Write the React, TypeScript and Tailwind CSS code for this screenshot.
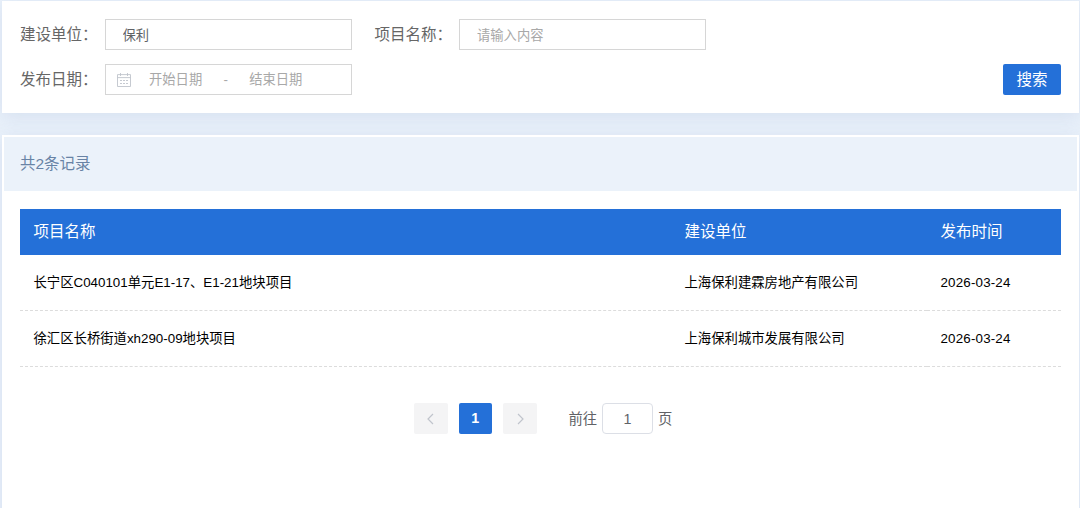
import type { ReactNode } from "react";

const columns = ["项目名称", "建设单位", "发布时间"];

const records = [
  {
    name: "长宁区C040101单元E1-17、E1-21地块项目",
    company: "上海保利建霖房地产有限公司",
    date: "2026-03-24",
  },
  {
    name: "徐汇区长桥街道xh290-09地块项目",
    company: "上海保利城市发展有限公司",
    date: "2026-03-24",
  },
];

const CalendarIcon = () => (
  <svg
    className="mr-[18.5px] h-[14px] w-[14px] shrink-0"
    viewBox="0 0 14 14"
    fill="none"
    stroke="#c0c4cc"
    strokeWidth="0.9"
  >
    <path d="M0.5 1.6H13.5V13.5H0.5ZM0.5 4.6H13.5M3.5 0V3M10.5 0V3" />
    <path d="M3 7.5H5M6 7.5H8M9 7.5H11M3 10.5H5M6 10.5H8M9 10.5H11" />
  </svg>
);

const Chevron = ({ d }: { d: string }) => (
  <svg
    className="h-3 w-3"
    viewBox="0 0 12 12"
    fill="none"
    stroke="#c0c4cc"
    strokeWidth="1.2"
  >
    <path d={d} />
  </svg>
);

const Field = ({ label, children }: { label: string; children: ReactNode }) => (
  <div className="flex items-center">
    <label
      lang="zh-CN"
      className="w-[84.5px] pt-px text-[15.5px] whitespace-nowrap text-[#666666]"
    >
      {label}：
    </label>
    {children}
  </div>
);

const SearchPanel = () => (
  <div className="mr-px ml-0.5 h-[111.5px] bg-white px-[18px] pt-[18px] shadow-[0_4px_18px_rgba(100,120,180,0.14)]">
    <div className="flex gap-[23px]">
      <Field label="建设单位">
        <input
          className="h-[31px] w-[247px] border border-[#d6d6d6] px-[17px] text-[13.3px] text-[#606266] outline-none"
          defaultValue="保利"
        />
      </Field>
      <Field label="项目名称">
        <input
          className="h-[31px] w-[247px] border border-[#d6d6d6] px-[17px] pt-px text-[13.3px] text-[#606266] outline-none placeholder:text-[#a8a8a8]"
          placeholder="请输入内容"
        />
      </Field>
    </div>
    <div className="mt-[14px] flex justify-between">
      <Field label="发布日期">
        <div className="flex h-[31px] w-[247px] items-center border border-[#d6d6d6] pl-[11px] text-[13.3px] text-[#a8a8a8]">
          <CalendarIcon />
          <span className="pt-px">开始日期</span>
          <span className="w-[47px] pt-px text-center">-</span>
          <span className="pt-px">结束日期</span>
        </div>
      </Field>
      <button className="h-[31px] w-[58px] rounded-[2px] bg-[#2470d8] pt-px text-[15.5px] text-white">
        搜索
      </button>
    </div>
  </div>
);

const RecordTable = () => (
  <table className="mt-[18px] ml-4 w-[1041px] table-fixed border-separate border-spacing-0 text-left">
    <colgroup>
      <col className="w-[651px]" />
      <col className="w-[256px]" />
      <col className="w-[134px]" />
    </colgroup>
    <thead>
      <tr className="h-[46.5px] text-[15.5px] text-white">
        {columns.map((title) => (
          <th key={title} className="bg-[#2470d8] px-[13.5px] font-normal">
            {title}
          </th>
        ))}
      </tr>
    </thead>
    <tbody>
      {records.map((item) => (
        <tr key={item.name} className="h-14 text-[13.35px] text-black">
          <td className="border-b border-dashed border-[#dcdcdc] px-[13.5px] pt-0.5">
            {item.name}
          </td>
          <td className="border-b border-dashed border-[#dcdcdc] px-[13.5px] pt-0.5">
            {item.company}
          </td>
          <td className="border-b border-dashed border-[#dcdcdc] px-[13.5px] pt-0.5 tracking-[0.18px]">
            {item.date}
          </td>
        </tr>
      ))}
    </tbody>
  </table>
);

const Pagination = () => (
  <div className="mt-9 ml-[410px] flex h-[31px] items-center text-[14.3px] text-[#606266]">
    <button className="flex h-[31px] w-[33.5px] items-center justify-center rounded-[2px] bg-[#f4f4f5]">
      <Chevron d="M8 1L3 6L8 11" />
    </button>
    <button className="ml-[11px] h-[31px] w-[33.5px] rounded-[2px] bg-[#2470d8] font-bold text-white">
      1
    </button>
    <button className="ml-[11px] flex h-[31px] w-[33.5px] items-center justify-center rounded-[2px] bg-[#f4f4f5]">
      <Chevron d="M4 1L9 6L4 11" />
    </button>
    <span className="ml-[32px] pt-0.5">前往</span>
    <input
      className="mx-[5px] h-[31px] w-[51px] rounded-[4px] border border-[#dcdfe6] text-center outline-none"
      defaultValue="1"
    />
    <span className="pt-0.5">页</span>
  </div>
);

export default function App() {
  return (
    <div className="h-[508px] overflow-hidden bg-[#e9f1fa] pt-px font-['Liberation_Sans','Noto_Sans_CJK_SC',sans-serif]">
      <SearchPanel />
      <div className="mt-[22.5px] mr-px ml-0.5 h-[400px] border-2 border-white bg-white shadow-[0_4px_18px_rgba(100,120,180,0.14)]">
        <div className="flex h-[53.5px] items-center bg-[#ebf2fa] px-4 text-[15.5px] text-[#6883a5]">
          共2条记录
        </div>
        <RecordTable />
        <Pagination />
      </div>
    </div>
  );
}
